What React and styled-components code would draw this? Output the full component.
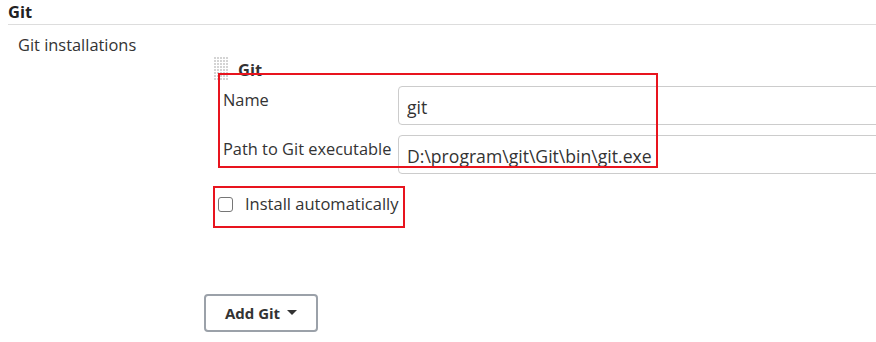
import React from "react";
import styled, { createGlobalStyle } from "styled-components";

const Global = createGlobalStyle`
  html, body { margin: 0; padding: 0; background: #fff; overflow: hidden; }
  body { font-family: "Open Sans", "Noto Sans", sans-serif; color: #333; }
`;

const Page = styled.div`
  position: relative;
  width: 876px;
  height: 342px;
  padding-left: 8px;
  box-sizing: border-box;
  overflow: hidden;
`;

const SectionHeader = styled.div`
  height: 25px;
  box-sizing: border-box;
  border-bottom: 1px solid #ddd;
  font-size: 16.5px;
  font-weight: 700;
  line-height: normal;
  color: #222;
`;

const Row = styled.div`
  display: grid;
  grid-template-columns: 196px 1fr;
  padding-top: 9px;
`;

const RowLabel = styled.div`
  padding-left: 10px;
  font-size: 16.4px;
  line-height: 22px;
`;

const Content = styled.div`
  width: 720px;
  padding-top: 23px;
`;

const Item = styled.div`
  padding-left: 10px;
`;

const ItemHeader = styled.div`
  display: flex;
  align-items: flex-start;
  gap: 9px;
  height: 29px;
`;

const ItemTitle = styled.span`
  font-size: 16.5px;
  font-weight: 700;
  line-height: 22px;
  padding-top: 2px;
`;

const FieldRow = styled.div`
  display: grid;
  grid-template-columns: 184px 1fr;
  margin-bottom: 10px;
`;

const FieldLabel = styled.label`
  padding-left: 9px;
  font-size: 16.4px;
  line-height: 22px;
  padding-top: 3px;
`;

const TextInput = styled.input`
  height: 39px;
  box-sizing: border-box;
  border: 1px solid #ccc;
  border-radius: 4px;
  padding: 3px 0 0 8px;
  font-family: "Open Sans", "Noto Sans", sans-serif;
  font-size: 17.6px;
  color: #333;
  background: #fff;
  outline: none;
  width: 100%;
`;

const CheckRow = styled.label`
  display: flex;
  align-items: center;
  gap: 12px;
  padding-left: 4px;
  margin-top: 19px;
  font-size: 16.5px;
  line-height: 22px;
`;

const CheckBox = styled.span`
  width: 15px;
  height: 15px;
  box-sizing: border-box;
  border: 1px solid #767676;
  border-radius: 3px;
  background: #fff;
  flex: none;
`;

const AddButton = styled.button`
  margin-top: 79px;
  width: 114px;
  height: 38px;
  box-sizing: border-box;
  border: 2px solid #9ba1a9;
  border-radius: 4px;
  background: #fff;
  display: flex;
  align-items: center;
  justify-content: center;
  gap: 7px;
  font-family: "Open Sans", "Noto Sans", sans-serif;
  font-size: 15px;
  font-weight: 700;
  color: #333;
  padding: 0 0 1px 0;
`;

const Annotation = styled.div`
  position: absolute;
  border: 2px solid #e8141e;
  box-sizing: border-box;
  pointer-events: none;
`;

const Handle = () => (
  <svg width="15" height="24" viewBox="0 0 15 24" style={{ flex: "none" }}>
    <defs>
      <pattern id="dots" width="3" height="3" patternUnits="userSpaceOnUse">
        <rect x="0" y="0" width="2" height="2" fill="#d4d4d4" />
      </pattern>
    </defs>
    <rect x="0" y="0" width="15" height="24" fill="url(#dots)" />
  </svg>
);

const Caret = () => (
  <svg width="10" height="6" viewBox="0 0 10 6">
    <path d="M0 0 L10 0 L5 5 Z" fill="#333" />
  </svg>
);

export default function App() {
  return (
    <Page>
      <Global />
      <SectionHeader>Git</SectionHeader>
      <Row>
        <RowLabel>Git installations</RowLabel>
        <Content>
          <Item>
            <ItemHeader>
              <Handle />
              <ItemTitle>Git</ItemTitle>
            </ItemHeader>
            <FieldRow>
              <FieldLabel>Name</FieldLabel>
              <TextInput defaultValue="git" />
            </FieldRow>
            <FieldRow>
              <FieldLabel>Path to Git executable</FieldLabel>
              <TextInput defaultValue="D:\program\git\Git\bin\git.exe" />
            </FieldRow>
            <CheckRow>
              <CheckBox />
              Install automatically
            </CheckRow>
          </Item>
          <AddButton>
            Add Git <Caret />
          </AddButton>
        </Content>
      </Row>
      <Annotation style={{ left: 218, top: 73, width: 440, height: 95 }} />
      <Annotation style={{ left: 213, top: 186, width: 192, height: 42 }} />
    </Page>
  );
}
